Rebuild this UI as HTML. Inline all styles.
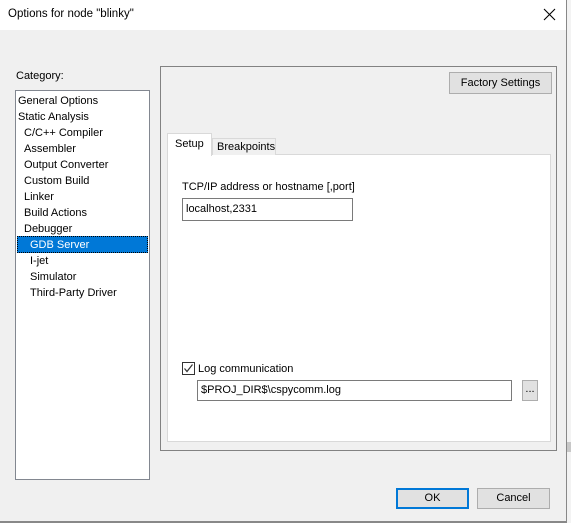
<!DOCTYPE html>
<html><head><style>
*{box-sizing:border-box;margin:0;padding:0}
body{width:571px;height:523px;background:#f0f0f0;font-family:"Liberation Sans",sans-serif;font-size:11px;color:#000;position:relative;overflow:hidden}
.a{position:absolute;white-space:nowrap}
.btn{position:absolute;background:#e1e1e1;border:1px solid #adadad;text-align:center}
</style></head><body>
<div class="a" style="left:566px;top:0;width:5px;height:523px;background:#f3f3f3;border-left:1px solid #888"></div>
<div class="a" style="left:567px;top:442px;width:4px;height:10px;background:#c8c8c8"></div>
<div class="a" style="left:0;top:0;width:566px;height:30px;background:#fff"></div>
<div class="a" style="left:8px;top:8px;font-size:11.5px">Options for node "blinky"</div>
<svg class="a" style="left:543px;top:8px" width="13" height="13"><path d="M1 1L12 12M12 1L1 12" stroke="#000" stroke-width="1.1"/></svg>
<div class="a" style="left:0;top:521px;width:566px;height:2px;background:#888"></div>

<div class="a" style="left:16px;top:70px">Category:</div>
<div class="a" style="left:15px;top:90px;width:135px;height:390px;background:#fff;border:1px solid #828790"></div>
<div class="a" style="left:17px;top:236px;width:131px;height:17px;background:#0078d7;border:1px dotted #000"></div>
<div class="a" style="left:18px;top:93px;line-height:16px">General Options<br>Static Analysis</div>
<div class="a" style="left:24px;top:125px;line-height:16px">C/C++ Compiler<br>Assembler<br>Output Converter<br>Custom Build<br>Linker<br>Build Actions<br>Debugger</div>
<div class="a" style="left:30px;top:237px;line-height:16px"><span style="color:#fff">GDB Server</span><br>I-jet<br>Simulator<br>Third-Party Driver</div>

<div class="a" style="left:160px;top:66px;width:397px;height:385px;border:1px solid #828282"></div>
<div class="btn" style="left:449px;top:72px;width:103px;height:22px;line-height:20px">Factory Settings</div>
<div class="a" style="left:167px;top:154px;width:384px;height:288px;background:#fff;border:1px solid #d9d9d9"></div>
<div class="a" style="left:212px;top:138px;width:64px;height:17px;background:#f0f0f0;border:1px solid #d9d9d9;border-bottom:none;padding-left:4px;line-height:16px">Breakpoints</div>
<div class="a" style="left:167px;top:133px;width:45px;height:23px;background:#fff;border:1px solid #d9d9d9;border-bottom:none;padding-left:7px;line-height:20px">Setup</div>
<div class="a" style="left:182px;top:181px">TCP/IP address or hostname [,port]</div>
<div class="a" style="left:182px;top:198px;width:171px;height:23px;border:1px solid #7a7a7a;background:#fff;padding-left:3px;line-height:20px">localhost,2331</div>
<div class="a" style="left:182px;top:362px;width:13px;height:13px;border:1px solid #333;background:#fff"></div>
<svg class="a" style="left:183px;top:363px" width="11" height="11"><path d="M1.5 5.5L4 8.5L9.5 1.5" stroke="#333" stroke-width="1.2" fill="none"/></svg>
<div class="a" style="left:198px;top:363px">Log communication</div>
<div class="a" style="left:197px;top:380px;width:315px;height:21px;border:1px solid #7a7a7a;background:#fff;padding-left:3px;line-height:19px">$PROJ_DIR$\cspycomm.log</div>
<div class="btn" style="left:522px;top:380px;width:16px;height:21px;line-height:16px">...</div>

<div class="btn" style="left:396px;top:488px;width:73px;height:21px;line-height:17px;border:2px solid #0078d7">OK</div>
<div class="btn" style="left:477px;top:488px;width:73px;height:21px;line-height:19px">Cancel</div>
</body></html>
